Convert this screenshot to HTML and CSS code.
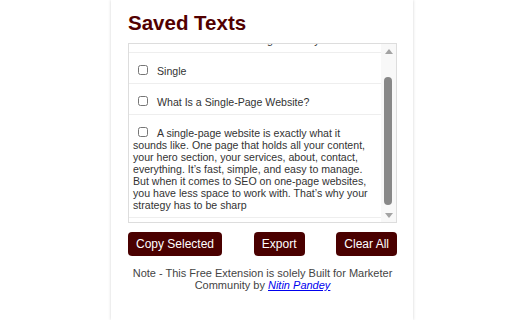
FILE: index.html
```html
<!DOCTYPE html>
<html lang="en">
<head>
<meta charset="utf-8">
<title>Saved Texts</title>
<link rel="stylesheet" href="styles.css">
</head>
<body>
<div class="panel">
  <h2 class="title">Saved Texts</h2>
  <div class="list">
    <div class="scroll" id="scroll">
      <label class="item"><input type="checkbox">Complete Guide to SEO for Single-Page Websites Structure and Design and Layout</label>
      <label class="item"><input type="checkbox">Single</label>
      <label class="item"><input type="checkbox">What Is a Single-Page Website?</label>
      <label class="item"><input type="checkbox">A single-page website is exactly what it sounds like. One page that holds all your content, your hero section, your services, about, contact, everything. It’s fast, simple, and easy to manage. But when it comes to SEO on one-page websites, you have less space to work with. That’s why your strategy has to be sharp</label>
    </div>
    <div class="vbar" aria-hidden="true">
      <div class="arrow"><span class="tri tri-up"></span></div>
      <div class="track"><div class="thumb"></div></div>
      <div class="arrow"><span class="tri tri-down"></span></div>
    </div>
  </div>
  <div class="actions">
    <button class="btn">Copy Selected</button>
    <button class="btn">Export</button>
    <button class="btn">Clear All</button>
  </div>
  <p class="note">Note - This Free Extension is solely Built for Marketer Community by <a href="#" class="link">Nitin Pandey</a></p>
</div>
<script src="script.js"></script>
</body>
</html>
```

FILE: styles.css
```css
html, body {
  margin: 0;
  padding: 0;
  background: #ffffff;
  font-family: "Liberation Sans", Arial, sans-serif;
}

.panel {
  margin-left: 111px;
  width: 302px;
  min-height: 100vh;
  box-sizing: border-box;
  padding: 11px 16px 0 17px;
  background: #ffffff;
  box-shadow: 0 0 3px rgba(0, 0, 0, 0.18);
}

.title {
  margin: 0 0 9px 0;
  font-size: 20.5px;
  line-height: 23px;
  font-weight: bold;
  color: #520000;
}

.list {
  display: flex;
  height: 180px;
  box-sizing: border-box;
  border: 1px solid #dddddd;
  background: #ffffff;
}

.scroll {
  flex: 1;
  min-width: 0;
  overflow-y: auto;
  scrollbar-width: none;
  padding-bottom: 4px;
}

.item {
  display: block;
  padding: 12px 6px 6px 4px;
  border-bottom: 1px solid #eeeeee;
  font-size: 10.6px;
  line-height: 12px;
  color: #333333;
}

.item input {
  width: 10px;
  height: 10px;
  margin: 0 9px 0 5px;
  vertical-align: 0;
}

.vbar {
  width: 15px;
  flex: none;
  display: flex;
  flex-direction: column;
  background: #f8f8f8;
}

.arrow {
  height: 14px;
  display: flex;
  align-items: center;
  justify-content: center;
}

.tri {
  width: 0;
  height: 0;
  border-left: 4.5px solid transparent;
  border-right: 4.5px solid transparent;
}

.tri-up {
  border-bottom: 5px solid #a3a3a3;
}

.tri-down {
  border-top: 5px solid #a3a3a3;
}

.track {
  flex: 1;
}

.thumb {
  width: 8px;
  height: 128px;
  margin: 19px 0 0 3px;
  border-radius: 4px;
  background: #888888;
}

.actions {
  display: flex;
  justify-content: space-between;
  margin-top: 9px;
}

.btn {
  font-family: "Liberation Sans", Arial, sans-serif;
  font-size: 12px;
  line-height: 14px;
  color: #ffffff;
  background: #4a0000;
  border: none;
  border-radius: 4px;
  padding: 5px 8px;
}

.note {
  margin: 11px 0 0 0;
  text-align: center;
  font-size: 11px;
  color: #444444;
}

.link {
  color: #0000ee;
  font-style: italic;
  text-decoration: underline;
}
```

FILE: script.js
```js
var scroller = document.getElementById('scroll');
scroller.scrollTop = scroller.scrollHeight;
```
